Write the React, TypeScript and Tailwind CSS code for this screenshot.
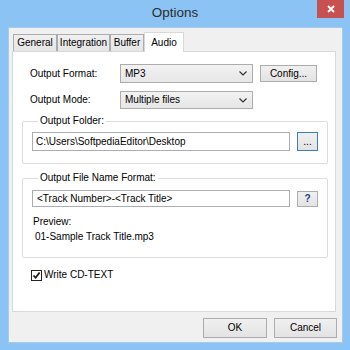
import React from 'react'

const font = { fontFamily: '"Liberation Sans", Arial, sans-serif' }

function Chevron() {
  return (
    <svg width="8" height="5" viewBox="0 0 8 5" className="shrink-0">
      <path d="M0.5 0.5 L4 4 L7.5 0.5" fill="none" stroke="#333" strokeWidth="1.2" />
    </svg>
  )
}

function Combo({ value, h }: { value: string; h: string }) {
  return (
    <div className={`${h} w-[133px] border border-[#acacac] bg-linear-to-b from-[#f2f2f2] to-[#e6e6e6] flex items-center justify-between pl-[4px] pr-[5px]`}>
      <span className="text-[10px] leading-[14px] text-black">{value}</span>
      <Chevron />
    </div>
  )
}

function Btn({ children, w, h, focus }: { children: React.ReactNode; w: string; h: string; focus?: boolean }) {
  return (
    <div
      className={`${w} ${h} flex items-center justify-center border ${focus ? 'border-[#3c7fb1]' : 'border-[#acacac]'} bg-linear-to-b from-[#f0f0f0] to-[#e3e3e3] text-[10px] leading-[14px] text-black`}
    >
      {children}
    </div>
  )
}

export default function App() {
  const tabs = [
    { name: 'General', w: 'w-[44px]' },
    { name: 'Integration', w: 'w-[53px]' },
    { name: 'Buffer', w: 'w-[34px]' },
  ]

  return (
    <div className="w-[350px] h-[350px] bg-[#8bc4f4] flex flex-col overflow-hidden" style={font}>
      {/* title bar */}
      <div className="relative h-[27px] flex items-center justify-center">
        <span className="text-[13.5px] text-[#2b2b2b] -mt-[1px]">Options</span>
        <div className="absolute right-[6px] top-0 w-[27px] h-[18px] bg-[#c75050] flex items-center justify-center">
          <svg width="8" height="8" viewBox="0 0 8 8">
            <path d="M1 1 L7 7 M7 1 L1 7" stroke="#fff" strokeWidth="1.8" />
          </svg>
        </div>
      </div>

      {/* client area */}
      <div className="ml-[8px] w-[335px] h-[316px] bg-[#f0f0f0] border border-[#a9cbe9] pl-[3px] pt-[4px]">
        {/* tabs */}
        <div className="flex items-end ml-[1px] h-[19px]">
          {tabs.map((t) => (
            <div
              key={t.name}
              className={`${t.w} h-[17px] border border-b-0 border-[#acacac] bg-linear-to-b from-[#f0f0f0] to-[#e5e5e5] flex items-center justify-center text-[10px] leading-[14px] text-black`}
            >
              {t.name}
            </div>
          ))}
          <div className="relative z-10 w-[40px] h-[20px] -mb-px border border-b-0 border-[#d9d9d9] bg-white flex items-start justify-center pt-[3px] text-[10px] leading-[14px] text-black">
            Audio
          </div>
        </div>

        {/* panel */}
        <div className="w-[324px] h-[261px] border border-[#d9d9d9] bg-white px-[9px]">
          <div className="pl-[8px] mt-[12px] flex items-center">
            <span className="w-[90px] text-[10px] leading-[14px] text-black">Output Format:</span>
            <Combo value="MP3" h="h-[19px]" />
            <div className="ml-[7px]">
              <Btn w="w-[57px]" h="h-[17px]">Config...</Btn>
            </div>
          </div>
          <div className="pl-[8px] mt-[8px] flex items-center">
            <span className="w-[90px] text-[10px] leading-[14px] text-black">Output Mode:</span>
            <Combo value="Multiple files" h="h-[18px]" />
          </div>

          {/* output folder */}
          <fieldset className="mt-[5px] w-[305px] border border-[#dcdcdc] rounded-[2px] px-[9px] pb-[12px]">
            <legend className="ml-[6px] px-[2px] text-[10px] leading-[14px] text-black">Output Folder:</legend>
            <div className="mt-[4px] flex items-center gap-[7px]">
              <div className="w-[258px] h-[19px] border border-[#abadb3] bg-white flex items-center pl-[3px] text-[10px] leading-[14px] text-black">
                C:\Users\SoftpediaEditor\Desktop
              </div>
              <Btn w="w-[21px]" h="h-[19px]" focus>
                ...
              </Btn>
            </div>
          </fieldset>

          {/* file name format */}
          <fieldset className="mt-[7px] w-[305px] border border-[#dcdcdc] rounded-[2px] px-[9px] pb-[13px]">
            <legend className="ml-[6px] px-[2px] text-[10px] leading-[14px] text-black">Output File Name Format:</legend>
            <div className="mt-[5px] flex items-center gap-[7px]">
              <div className="w-[258px] h-[17px] border border-[#abadb3] bg-white flex items-center pl-[4px] text-[10px] leading-[14px] text-black">
                &lt;Track Number&gt;-&lt;Track Title&gt;
              </div>
              <Btn w="w-[21px]" h="h-[16px]">
                <span className="text-[#1a3f8f] font-bold">?</span>
              </Btn>
            </div>
            <div className="mt-[8px] pl-[1px] text-[10px] leading-[14px] text-black">Preview:</div>
            <div className="mt-[1px] pl-[3px] text-[10px] leading-[14px] text-black">01-Sample Track Title.mp3</div>
          </fieldset>

          {/* checkbox */}
          <div className="mt-[10px] pl-[9px] flex items-center gap-[2px]">
            <div className="w-[11px] h-[11px] border border-[#222] bg-white flex items-center justify-center">
              <svg width="9" height="9" viewBox="0 0 9 9">
                <path d="M1.5 4.5 L3.6 6.8 L7.6 1.6" fill="none" stroke="#111" strokeWidth="1.7" />
              </svg>
            </div>
            <span className="text-[10px] leading-[14px] text-black">Write CD-TEXT</span>
          </div>
        </div>

        {/* dialog buttons */}
        <div className="mt-[6px] pr-[5px] flex justify-end gap-[7px]">
          <Btn w="w-[64px]" h="h-[20px]">OK</Btn>
          <Btn w="w-[63px]" h="h-[20px]">Cancel</Btn>
        </div>
      </div>
    </div>
  )
}
